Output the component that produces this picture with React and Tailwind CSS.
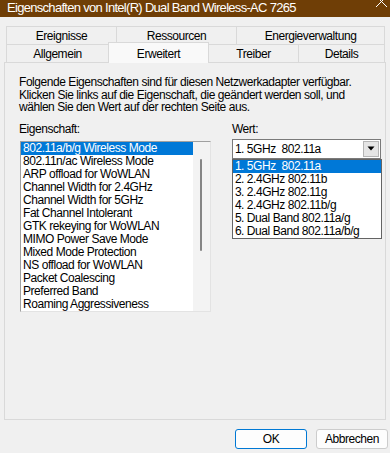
import React from "react";

const props = [
  "802.11a/b/g Wireless Mode",
  "802.11n/ac Wireless Mode",
  "ARP offload for WoWLAN",
  "Channel Width for 2.4GHz",
  "Channel Width for 5GHz",
  "Fat Channel Intolerant",
  "GTK rekeying for WoWLAN",
  "MIMO Power Save Mode",
  "Mixed Mode Protection",
  "NS offload for WoWLAN",
  "Packet Coalescing",
  "Preferred Band",
  "Roaming Aggressiveness",
];

const values = [
  "1. 5GHz\u00a0\u00a0802.11a",
  "2. 2.4GHz 802.11b",
  "3. 2.4GHz 802.11g",
  "4. 2.4GHz 802.11b/g",
  "5. Dual Band 802.11a/g",
  "6. Dual Band 802.11a/b/g",
];

function Tab({ w, children }) {
  return (
    <div
      className="h-[18px] flex items-center justify-center border-t border-l border-[#d9d9d9] bg-[#f0f0f0] last:border-r"
      style={{ width: w }}
    >
      {children}
    </div>
  );
}

export default function App() {
  return (
    <div className="w-[390px] h-[453px] bg-[#f0f0f0] overflow-hidden font-['Liberation_Sans',Arial,sans-serif] text-[12px] tracking-[-0.45px] text-black flex flex-col">
      {/* title bar */}
      <div className="h-[17px] bg-[#6f3e06] flex justify-between overflow-hidden shrink-0">
        <div className="pl-[7px] text-white text-[13px] tracking-[-0.7px] leading-[13px] mt-[1px] whitespace-nowrap">
          Eigenschaften von Intel(R) Dual Band Wireless-AC 7265
        </div>
        <svg width="14" height="17" viewBox="0 0 14 17" className="mr-[1px]">
          <path d="M1 -4 L12 7 M12 -4 L1 7" stroke="white" strokeWidth="1" />
        </svg>
      </div>

      {/* tabs */}
      <div className="mt-[9px] ml-[6px] flex flex-col">
        <div className="flex">
          <Tab w={110}>Ereignisse</Tab>
          <Tab w={120}>Ressourcen</Tab>
          <Tab w={149}>Energieverwaltung</Tab>
        </div>
        <div className="flex items-end h-[18px]">
          <Tab w={102}>Allgemein</Tab>
          <div className="w-[101px] h-[21px] relative top-[1px] z-10 bg-[#f9f9f9] border border-b-0 border-[#d9d9d9] flex justify-center pt-[2px]">
            Erweitert
          </div>
          <div className="h-[18px] w-[89px] flex items-center justify-center border-t border-[#d9d9d9]">
            Treiber
          </div>
          <Tab w={87}>Details</Tab>
        </div>
      </div>

      {/* panel */}
      <div className="mx-[4px] h-[358px] border border-[#d9d9d9] bg-[#f0f0f0] pl-[14px] pr-[4px] pt-[13px] shrink-0">
        <p className="leading-[12.5px]">
          Folgende Eigenschaften sind für diesen Netzwerkadapter verfügbar.
          <br />
          Klicken Sie links auf die Eigenschaft, die geändert werden soll, und
          <br />
          wählen Sie den Wert auf der rechten Seite aus.
        </p>
        <div className="flex mt-[9px]">
          <div className="flex flex-col w-[193px]">
            <div className="leading-[13px]">Eigenschaft:</div>
            <div className="ml-[1px] mt-[5px] h-[171px] border border-t-[#a0a0a0] border-l-[#a0a0a0] border-r-[#e3e3e3] border-b-[#e3e3e3] bg-white flex">
              <div className="flex-1 flex flex-col">
                {props.map((p, i) => (
                  <div
                    key={p}
                    className={
                      "h-[13px] leading-[13px] pl-[2px] whitespace-nowrap " +
                      (i === 0 ? "bg-[#0078d7] text-white" : "")
                    }
                  >
                    {p}
                  </div>
                ))}
              </div>
              <div className="w-[17px] bg-[#f3f3f3] flex justify-center pt-[17px]">
                <div className="w-[2px] h-[92px] bg-[#858585] rounded-full"></div>
              </div>
            </div>
          </div>
          <div className="flex flex-col ml-[21px] w-[150px]">
            <div className="leading-[13px]">Wert:</div>
            <div className="relative mt-[3px]">
              <div className="h-[20px] w-[149px] border border-[#7a7a7a] bg-white flex items-center justify-between pl-[2px] pr-[1px]">
                <span className="whitespace-nowrap">1. 5GHz&nbsp;&nbsp;802.11a</span>
                <div className="w-[16px] h-[16px] bg-[#e5e5e5] border border-[#b5b5b5] flex items-center justify-center">
                  <svg width="8" height="5" viewBox="0 0 8 5">
                    <path d="M0.5 0.5 H7.5 L4 4.5 Z" fill="black" />
                  </svg>
                </div>
              </div>
              <div className="absolute left-0 top-[20px] w-[150px] border border-[#646464] bg-white z-20">
                {values.map((v, i) => (
                  <div
                    key={v}
                    className={
                      "h-[13px] leading-[13px] pl-[2px] whitespace-nowrap " +
                      (i === 0 ? "bg-[#0078d7] text-white" : "")
                    }
                  >
                    {v}
                  </div>
                ))}
              </div>
            </div>
          </div>
        </div>
      </div>

      {/* buttons */}
      <div className="flex justify-end gap-[9px] pr-[2px] mt-[9px]">
        <div className="w-[72px] h-[20px] rounded-[3px] border border-[#0078d4] bg-[#fdfdfd] flex items-center justify-center">
          OK
        </div>
        <div className="w-[72px] h-[20px] rounded-[3px] border border-[#cccccc] bg-[#fdfdfd] flex items-center justify-center">
          Abbrechen
        </div>
      </div>
    </div>
  );
}
